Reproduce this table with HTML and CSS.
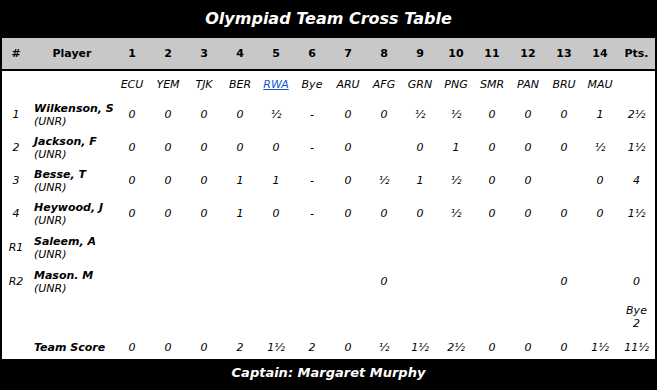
FILE: index.html
```html
<!DOCTYPE html>
<html>
<head>
<meta charset="utf-8">
<link rel="stylesheet" href="styles.css">
</head>
<body>
<div class="board">
  <div class="title">Olympiad Team Cross Table</div>
  <table class="cross">
    <colgroup>
      <col class="c-num"><col class="c-player">
      <col class="c-rd"><col class="c-rd"><col class="c-rd"><col class="c-rd"><col class="c-rd"><col class="c-rd"><col class="c-rd">
      <col class="c-rd"><col class="c-rd"><col class="c-rd"><col class="c-rd"><col class="c-rd"><col class="c-rd"><col class="c-rd">
      <col class="c-pts">
    </colgroup>
    <thead>
      <tr class="head">
        <th>#</th><th>Player</th>
        <th>1</th><th>2</th><th>3</th><th>4</th><th>5</th><th>6</th><th>7</th>
        <th>8</th><th>9</th><th>10</th><th>11</th><th>12</th><th>13</th><th>14</th>
        <th>Pts.</th>
      </tr>
    </thead>
    <tbody>
      <tr class="opp">
        <td></td><td></td>
        <td>ECU</td><td>YEM</td><td>TJK</td><td>BER</td><td><a href="#">RWA</a></td><td>Bye</td><td>ARU</td>
        <td>AFG</td><td>GRN</td><td>PNG</td><td>SMR</td><td>PAN</td><td>BRU</td><td>MAU</td>
        <td></td>
      </tr>
      <tr class="prow">
        <td class="bd">1</td><td class="name"><b>Wilkenson, S</b><br>(UNR)</td>
        <td>0</td><td>0</td><td>0</td><td>0</td><td>½</td><td>-</td><td>0</td>
        <td>0</td><td>½</td><td>½</td><td>0</td><td>0</td><td>0</td><td>1</td>
        <td>2½</td>
      </tr>
      <tr class="prow">
        <td class="bd">2</td><td class="name"><b>Jackson, F</b><br>(UNR)</td>
        <td>0</td><td>0</td><td>0</td><td>0</td><td>0</td><td>-</td><td>0</td>
        <td></td><td>0</td><td>1</td><td>0</td><td>0</td><td>0</td><td>½</td>
        <td>1½</td>
      </tr>
      <tr class="prow">
        <td class="bd">3</td><td class="name"><b>Besse, T</b><br>(UNR)</td>
        <td>0</td><td>0</td><td>0</td><td>1</td><td>1</td><td>-</td><td>0</td>
        <td>½</td><td>1</td><td>½</td><td>0</td><td>0</td><td></td><td>0</td>
        <td>4</td>
      </tr>
      <tr class="prow">
        <td class="bd">4</td><td class="name"><b>Heywood, J</b><br>(UNR)</td>
        <td>0</td><td>0</td><td>0</td><td>1</td><td>0</td><td>-</td><td>0</td>
        <td>0</td><td>0</td><td>½</td><td>0</td><td>0</td><td>0</td><td>0</td>
        <td>1½</td>
      </tr>
      <tr class="prow tall">
        <td class="bd">R1</td><td class="name"><b>Saleem, A</b><br>(UNR)</td>
        <td></td><td></td><td></td><td></td><td></td><td></td><td></td>
        <td></td><td></td><td></td><td></td><td></td><td></td><td></td>
        <td></td>
      </tr>
      <tr class="prow">
        <td class="bd">R2</td><td class="name"><b>Mason. M</b><br>(UNR)</td>
        <td></td><td></td><td></td><td></td><td></td><td></td><td></td>
        <td>0</td><td></td><td></td><td></td><td></td><td>0</td><td></td>
        <td>0</td>
      </tr>
      <tr class="bye">
        <td></td><td></td>
        <td></td><td></td><td></td><td></td><td></td><td></td><td></td>
        <td></td><td></td><td></td><td></td><td></td><td></td><td></td>
        <td>Bye<br>2</td>
      </tr>
      <tr class="total">
        <td></td><td class="name"><b>Team Score</b></td>
        <td>0</td><td>0</td><td>0</td><td>2</td><td>1½</td><td>2</td><td>0</td>
        <td>½</td><td>1½</td><td>2½</td><td>0</td><td>0</td><td>0</td><td>1½</td>
        <td>11½</td>
      </tr>
    </tbody>
  </table>
  <div class="footer">Captain: Margaret Murphy</div>
</div>
</body>
</html>
```

FILE: styles.css
```css
html, body {
  margin: 0;
  padding: 0;
  background: #000;
}
.board {
  width: 657px;
  height: 390px;
  background: #000;
  font-family: "DejaVu Sans", Verdana, sans-serif;
  overflow: hidden;
}
.title {
  height: 38px;
  line-height: 37px;
  color: #fff;
  font-weight: bold;
  font-style: italic;
  font-size: 16px;
  text-align: center;
}
.cross {
  margin-left: 2px;
  width: 653px;
  table-layout: fixed;
  border-collapse: collapse;
  border-spacing: 0;
  background: #fff;
  font-size: 11px;
  color: #000;
}
.c-num { width: 28px; }
.c-player { width: 84px; }
.c-rd { width: 36px; }
.c-pts { width: 37px; }
.cross th, .cross td {
  padding: 0;
  text-align: center;
  vertical-align: middle;
}
.head th {
  background: #c8c8c8;
  height: 31px;
  font-size: 11px;
  font-weight: bold;
  border-bottom: 2px solid #000;
}
.opp td {
  height: 27px;
  font-style: italic;
}
.opp a {
  color: #1a55cc;
  text-decoration: underline;
}
.prow td {
  height: 33px;
  font-style: italic;
}
.prow.tall td {
  height: 35px;
}
.cross td.name {
  text-align: left;
  padding-left: 4px;
  line-height: 13px;
  white-space: nowrap;
}
.name b {
  font-weight: bold;
}
.bye td {
  height: 38px;
  font-style: italic;
  line-height: 13px;
}
.total td {
  height: 23px;
  font-style: italic;
}
.footer {
  height: 30px;
  line-height: 28px;
  color: #fff;
  font-weight: bold;
  font-style: italic;
  font-size: 13px;
  text-align: center;
}
```
